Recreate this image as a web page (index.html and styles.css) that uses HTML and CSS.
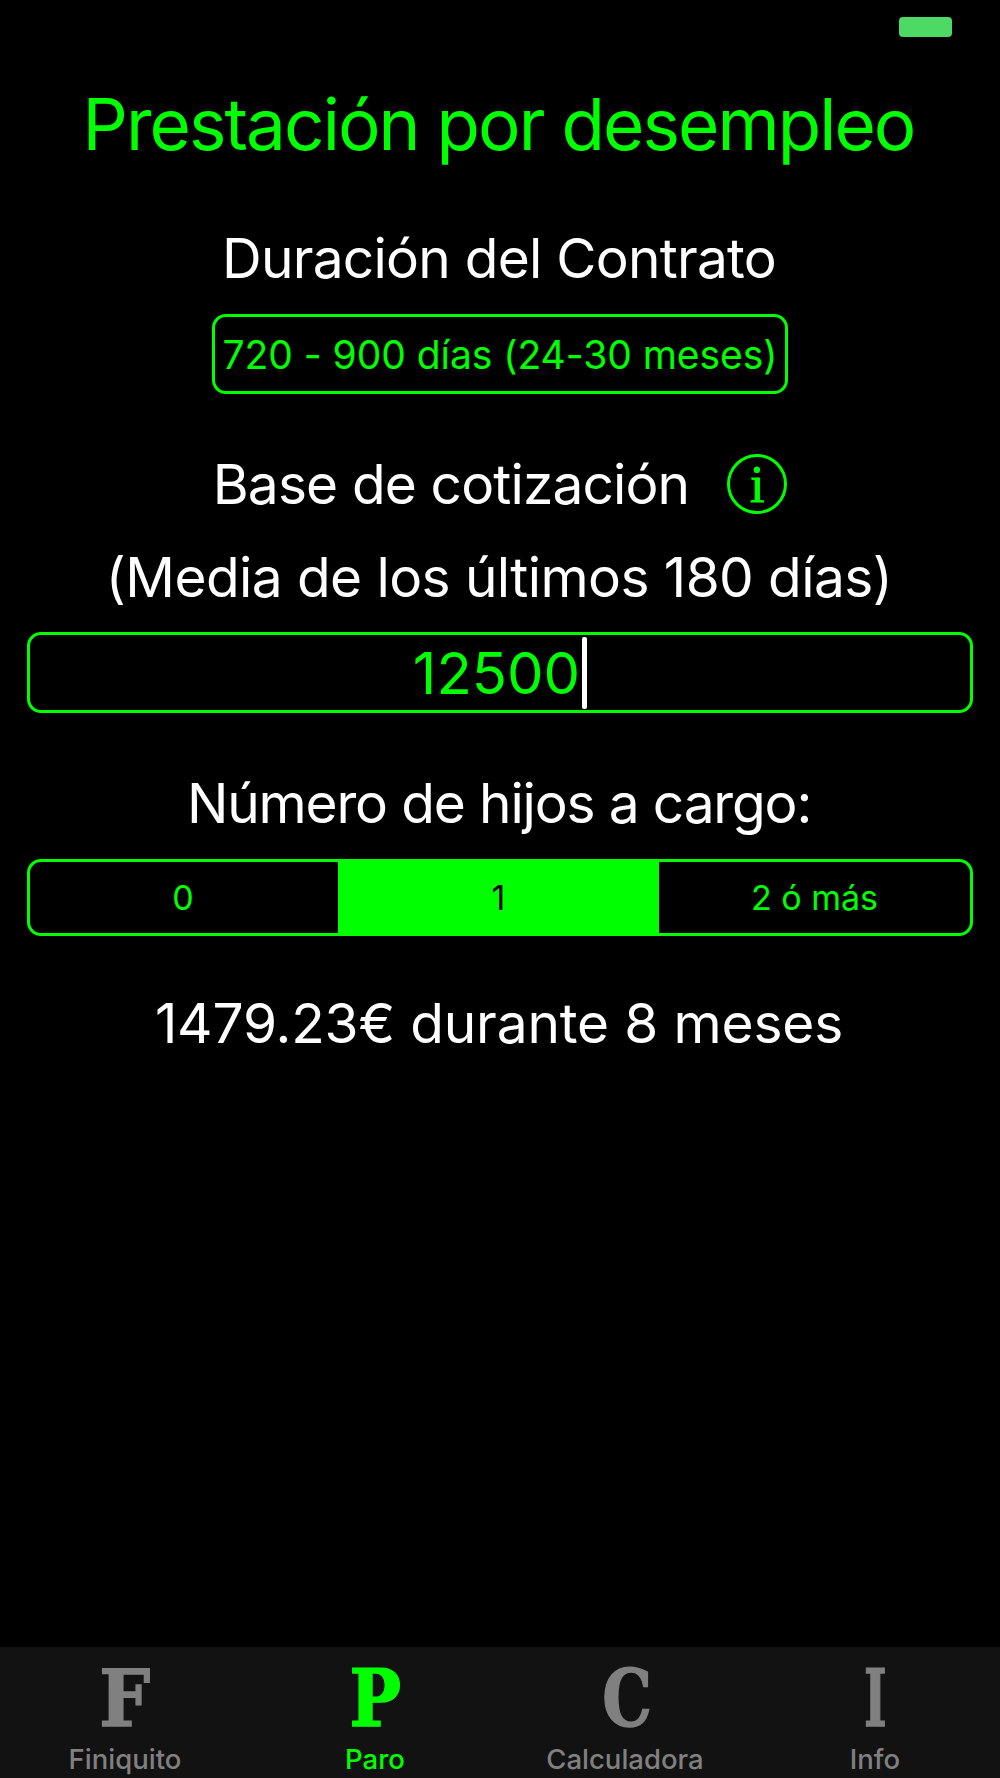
FILE: index.html
```html
<!DOCTYPE html>
<html lang="es">
<head>
<meta charset="utf-8">
<title>Prestación por desempleo</title>
<link rel="stylesheet" href="styles.css">
</head>
<body>
<div class="app">
  <div class="status"><span class="battery"></span></div>
  <main class="content">
    <h1 class="title">Prestación por desempleo</h1>
    <div class="heading heading-duration">Duración del Contrato</div>
    <div class="picker">720 - 900 días (24-30 meses)</div>
    <div class="heading heading-base">
      <span>Base de cotización</span>
      <span class="info">i</span>
    </div>
    <div class="heading heading-media">(Media de los últimos 180 días)</div>
    <div class="input"><span>12500</span><span class="caret"></span></div>
    <div class="heading heading-kids">Número de hijos a cargo:</div>
    <div class="segments">
      <div class="segment seg-a">0</div>
      <div class="segment seg-b selected">1</div>
      <div class="segment seg-c">2 ó más</div>
    </div>
    <div class="heading heading-result">1479.23€ durante 8 meses</div>
  </main>
  <nav class="tabs">
    <div class="tab"><span class="glyph glyph-f">F</span><span class="label">Finiquito</span></div>
    <div class="tab active"><span class="glyph glyph-p">P</span><span class="label">Paro</span></div>
    <div class="tab"><span class="glyph glyph-c">C</span><span class="label">Calculadora</span></div>
    <div class="tab"><span class="glyph glyph-i">I</span><span class="label">Info</span></div>
  </nav>
</div>
</body>
</html>
```
FILE: styles.css
```css
* { box-sizing: border-box; }
html, body { margin: 0; padding: 0; background: #000; }
body { font-family: Inter, "Liberation Sans", sans-serif; color: #fff; }
.app { width: 1000px; height: 1778px; display: flex; flex-direction: column; overflow: hidden; }
.status { height: 60px; display: flex; justify-content: flex-end; align-items: flex-start; padding: 17px 48px 0 0; }
.battery { width: 53px; height: 20px; background: #4cd964; border-radius: 4px; }
.content { flex: 1; display: flex; flex-direction: column; align-items: center; }
.title { margin: 24px 0 0; padding-right: 3px; height: 80px; line-height: 80px; font-size: 71px; font-weight: 400; color: #00ff00; letter-spacing: -1.95px; white-space: nowrap; }
.heading { display: flex; align-items: center; justify-content: center; height: 60px; font-size: 55px; letter-spacing: -0.75px; white-space: nowrap; }
.heading-duration { margin-top: 64px; padding-right: 2px; }
.picker { margin-top: 26px; width: 576px; height: 80px; border: 3px solid #00ff00; border-radius: 14px; color: #00ff00; font-size: 39px; letter-spacing: -0.05px; display: flex; align-items: center; justify-content: center; white-space: nowrap; }
.heading-base { margin-top: 60px; gap: 38px; height: 60px; letter-spacing: -0.85px; }
.info { width: 60px; height: 60px; border: 3px solid #00ff00; border-radius: 50%; color: #00ff00; font-family: "Liberation Serif", serif; font-size: 52px; font-weight: 400; letter-spacing: 0; display: flex; align-items: center; justify-content: center; -webkit-text-stroke: 1px #00ff00; }
.heading-media { margin-top: 33px; letter-spacing: -0.58px; padding-right: 2px; }
.input { margin-top: 25px; width: 946px; height: 81px; border: 3px solid #00ff00; border-radius: 14px; color: #00ff00; font-size: 58px; display: flex; align-items: center; justify-content: center; }
.caret { width: 5px; height: 72px; background: #fff; border-radius: 2px; margin-left: 2px; }
.heading-kids { margin-top: 60px; letter-spacing: -1.15px; padding-right: 2px; }
.segments { margin-top: 26px; width: 946px; height: 77px; border: 3px solid #00ff00; border-radius: 14px; display: flex; color: #00ff00; font-size: 34px; overflow: hidden; }
.segment { display: flex; align-items: center; justify-content: center; }
.seg-a { width: 308px; padding-right: 2px; }
.seg-b { width: 321px; }
.seg-c { flex: 1; }
.selected { background: #00ff00; color: #000; }
.heading-result { margin-top: 57px; letter-spacing: -0.15px; padding-right: 2px; }
.tabs { height: 131px; background: #121212; display: grid; grid-template-columns: repeat(4, 250px); }
.tab { display: flex; flex-direction: column; align-items: center; color: #808080; }
.tab.active { color: #00ff00; }
.glyph { height: 70px; margin-top: 12px; line-height: 80px; font-family: "DejaVu Serif", serif; font-weight: 700; font-size: 78px; -webkit-text-stroke: 1.5px currentColor; }
.glyph-f { transform: scaleX(0.92); }
.glyph-p { transform: scaleX(0.88); }
.glyph-c { transform: scaleX(0.8); margin-left: 5px; }
.glyph-i { transform: scaleX(0.62); }
.label { margin-top: 15px; font-size: 27.5px; font-weight: 500; line-height: 30px; }
```
